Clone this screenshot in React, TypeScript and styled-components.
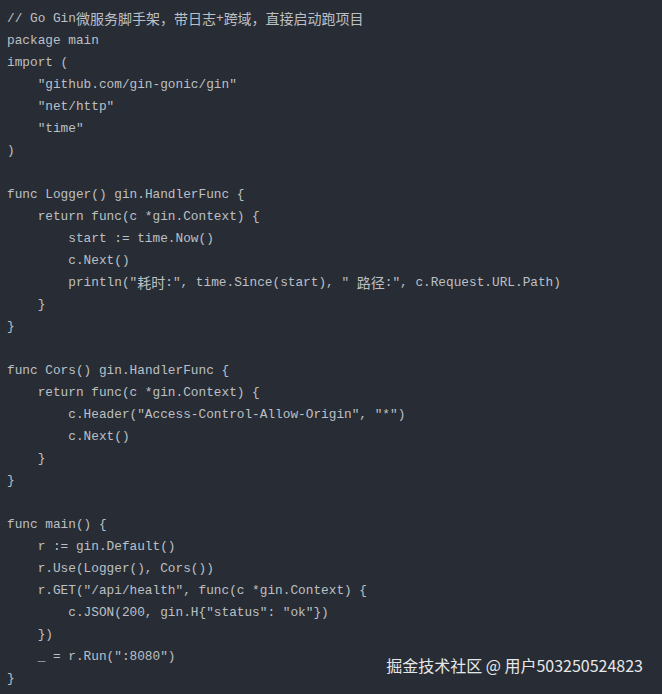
import React from "react";
import styled, { createGlobalStyle } from "styled-components";

const Global = createGlobalStyle`
  html, body { margin: 0; padding: 0; background: #282c34; }
  #root { width: 662px; height: 694px; }
`;

const Frame = styled.div`
  position: relative;
  width: 662px;
  height: 694px;
  box-sizing: border-box;
  background: #282c34;
  overflow: hidden;
  padding: 8px 0 0 7px;
`;

const Code = styled.pre`
  margin: 0;
  font-family: "Liberation Mono", "DejaVu Sans Mono", "Noto Sans CJK SC", monospace;
  font-size: 12.77px;
  line-height: 22px;
  color: #bcc0c6;
  white-space: pre;
`;

const Line = styled.div<{ $indent: number }>`
  height: 22px;
  line-height: 22px;
  padding-left: ${(p) => p.$indent * 30.64}px;
`;

const Cjk = styled.span`
  font-family: "Noto Sans CJK SC", sans-serif;
  font-size: 14px;
  line-height: 22px;
  vertical-align: top;
  display: inline-block;
  height: 22px;
  position: relative;
  top: -1px;
`;

const Watermark = styled.div`
  position: absolute;
  right: 19px;
  bottom: 18px;
  font-family: "Noto Sans CJK SC", "Noto Sans", sans-serif;
  font-size: 16px;
  line-height: 22px;
  color: #e6e7e9;
  white-space: nowrap;
`;

const lines: [number, string][] = [
  [0, "// Go Gin{微服务脚手架，带日志}+{跨域，直接启动跑项目}"],
  [0, "package main"],
  [0, "import ("],
  [1, "\"github.com/gin-gonic/gin\""],
  [1, "\"net/http\""],
  [1, "\"time\""],
  [0, ")"],
  [0, ""],
  [0, "func Logger() gin.HandlerFunc {"],
  [1, "return func(c *gin.Context) {"],
  [2, "start := time.Now()"],
  [2, "c.Next()"],
  [2, "println(\"{耗时}:\", time.Since(start), \" {路径}:\", c.Request.URL.Path)"],
  [1, "}"],
  [0, "}"],
  [0, ""],
  [0, "func Cors() gin.HandlerFunc {"],
  [1, "return func(c *gin.Context) {"],
  [2, "c.Header(\"Access-Control-Allow-Origin\", \"*\")"],
  [2, "c.Next()"],
  [1, "}"],
  [0, "}"],
  [0, ""],
  [0, "func main() {"],
  [1, "r := gin.Default()"],
  [1, "r.Use(Logger(), Cors())"],
  [1, "r.GET(\"/api/health\", func(c *gin.Context) {"],
  [2, "c.JSON(200, gin.H{\"status\": \"ok\"})"],
  [1, "})"],
  [1, "_ = r.Run(\":8080\")"],
  [0, "}"],
];

function renderText(t: string) {
  const parts: React.ReactNode[] = [];
  const re = /\{([^{}]*[\u3000-\u9fff\uff00-\uffef][^{}]*)\}/g;
  let last = 0;
  let m: RegExpExecArray | null;
  let k = 0;
  while ((m = re.exec(t))) {
    if (m.index > last) parts.push(t.slice(last, m.index));
    parts.push(<Cjk key={k++}>{m[1]}</Cjk>);
    last = m.index + m[0].length;
  }
  if (last < t.length) parts.push(t.slice(last));
  return parts.length ? parts : "\u00a0";
}

export default function App() {
  return (
    <>
      <Global />
      <Frame>
        <Code>
          {lines.map(([indent, text], i) => (
            <Line key={i} $indent={indent}>
              {renderText(text)}
            </Line>
          ))}
        </Code>
        <Watermark>掘金技术社区 @ 用户503250524823</Watermark>
      </Frame>
    </>
  );
}
